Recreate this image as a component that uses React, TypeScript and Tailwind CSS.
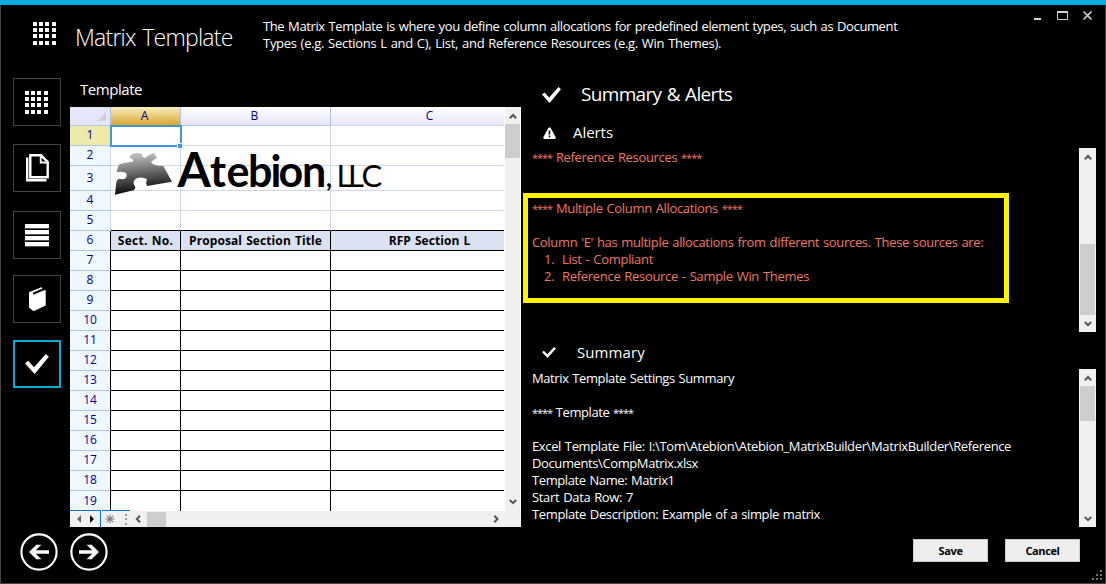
import type { ReactNode } from 'react';

const GridIcon = () => (
  <svg width="24" height="24" viewBox="0 0 24 24" fill="#fff" shapeRendering="crispEdges">
    {[0, 6, 12, 19].map((y) => [0, 6, 12, 19].map((x) => <rect key={`${x}-${y}`} x={x} y={y} width="4" height="4" />))}
  </svg>
);

const PagesIcon = () => (
  <svg className="shrink-0" width="48" height="48" viewBox="13 144 48 48" fill="none" stroke="#fff">
    <path d="M30.3 155.3H41L47.7 162V177.3H30.3Z" strokeWidth="2.4" />
    <path d="M40.7 155V162.5H48" strokeWidth="1.8" />
    <path d="M27.2 157.5V180.3H46.5" strokeWidth="2.4" />
  </svg>
);

const ListIcon = () => (
  <svg width="24" height="24" viewBox="0 0 24 24" shapeRendering="crispEdges">
    {[0, 6, 12, 18].map((y) => (
      <g key={y}>
        <rect y={y} width="24" height="4" fill="#fff" />
        <rect y={y + 4} width="24" height="1" fill="#555" />
      </g>
    ))}
  </svg>
);

const BookIcon = () => (
  <svg className="shrink-0" width="48" height="48" viewBox="13 275 48 48" fill="#fff">
    <path d="M29 292.2L41.4 287.2L42.6 288.6L32.6 292.8L33.8 294.8L42.8 290.8L45.7 290V305.4L34.2 311L32.6 310.6L29 307.6Z" />
  </svg>
);

const Check = ({ width, height }: { width: number; height: number }) => (
  <svg width={width} height={height} viewBox="25.7 354 23.6 20.2" fill="#fff" preserveAspectRatio="none">
    <path d="M25.7 363.6L28.8 360.9L34.6 367.4L46.2 354.1L49.2 356.8L35.2 374.1Z" />
  </svg>
);

const ArrowButton = ({ flip }: { flip?: boolean }) => (
  <svg width="38" height="38" viewBox="20 533 38 38" className={flip ? 'rotate-180' : ''}>
    <circle cx="39" cy="552" r="17.6" fill="none" stroke="#fff" strokeWidth="2.1" />
    <path fill="#fff" d="M29 552L36.3 544.8H41.4L35.8 550.3H49V553.7H35.8L41.4 559.2H36.3Z" />
  </svg>
);

const chevrons = {
  up: 'M0.8 6.2L4 3L7.2 6.2',
  down: 'M0.8 2L4 5.2L7.2 2',
  left: 'M6 0.8L2.8 4L6 7.2',
  right: 'M2.3 0.8L5.5 4L2.3 7.2',
};
const Chevron = ({ dir }: { dir: keyof typeof chevrons }) => (
  <svg width="8" height="8" viewBox="0 0 8 8" fill="none" stroke="#555" strokeWidth="2">
    <path d={chevrons[dir]} />
  </svg>
);

const Stars = () => <span className="text-[11px] tracking-[-1.05px]">****</span>;

function VScroll({ thumb, className }: { thumb: string; className: string }) {
  return (
    <div className={`flex w-[17px] shrink-0 flex-col items-center bg-[#f0f0f0] ${className}`}>
      <div className="flex h-[17px] items-center"><Chevron dir="up" /></div>
      <div className="flex w-[15px] flex-1 flex-col"><div className={`bg-[#cdcdcd] ${thumb}`} /></div>
      <div className="flex h-[17px] items-center"><Chevron dir="down" /></div>
    </div>
  );
}

function NavTile({ className, children }: { className: string; children: ReactNode }) {
  return <div className={`flex h-12 w-12 items-center justify-center ${className}`}>{children}</div>;
}

function Logo() {
  return (
    <svg className="absolute left-[43px] top-[33px] overflow-visible" width="274" height="66" viewBox="113 140 274 66">
      <defs>
        <linearGradient id="piece" x1="0" y1="0" x2="0.15" y2="1">
          <stop offset="0" stopColor="#cfcfcf" />
          <stop offset="0.45" stopColor="#777" />
          <stop offset="1" stopColor="#080808" />
        </linearGradient>
      </defs>
      <path
        transform="scale(0.33333)"
        fill="url(#piece)"
        d="M345 584L349 545Q353 533 366 538Q382 538 380 522Q374 513 350 516L356 495Q362 489 398 485Q404 479 392 475Q384 468 398 461Q415 456 426 462Q425 474 437 473Q446 462 462 459L471 474Q458 479 453 487Q460 498 490 498L516 545L441 558Q436 548 441 538Q428 529 410 535Q396 544 403 556Q410 566 400 571Z"
      />
      <text y="187" x="177.5 210 226.5 248 270.5 278.5 302 326" className="font-['Lato'] text-[43px] font-bold">
        <tspan className="text-[48px]">A</tspan>tebion<tspan className="text-[26px]">,</tspan>
      </text>
      <text y="186.5" x="336.5 348 361.5" className="font-['Lato'] text-[31px]">LLC</text>
    </svg>
  );
}

const headings = ['tracking-[0.25px]', 'tracking-[0.1px]', 'tracking-[0.07px]'];
const titles = ['Sect. No.', 'Proposal Section Title', 'RFP Section L'];
const rows = Array.from({ length: 19 }, (_, i) => i + 1);

function Row({ n }: { n: number }) {
  const dark = n >= 6;
  const line = dark ? 'border-r-black' : 'border-r-[#d0d7e5]';
  const bottom = n === 19 ? '' : 'border-b';
  const bottomLine = n >= 5 ? 'border-b-black' : 'border-b-[#d0d7e5]';
  return (
    <div className={`grid grid-cols-[41px_70px_150px_173px] text-[12px] leading-4 ${n === 3 ? 'h-[25px]' : 'h-5'}`}>
      <div className={`flex items-center justify-center border-r text-[#00008b] ${n === 3 ? '' : 'pb-px'} ${n === 19 ? '' : 'border-b border-b-[#b0c4de]'} ${line} ${n === 1 ? 'bg-[#eee8aa]' : 'bg-[#f0f8ff]'}`}>{n}</div>
      {[0, 1, 2].map((c) => (
        <div key={c} className={`flex items-center justify-center overflow-hidden whitespace-nowrap font-bold text-black [word-spacing:0.8px] ${bottom} ${line} ${bottomLine} ${c < 2 ? 'border-r' : 'pl-6'} ${headings[c]} ${n === 6 ? 'bg-[#d9e1f2]' : 'bg-white'}`}>
          {n === 6 ? titles[c] : ''}
        </div>
      ))}
    </div>
  );
}

function Sheet() {
  return (
    <div className="relative flex h-[420px] flex-col bg-[#f0f0f0]">
      <div className="flex h-[404px]">
        <div className="w-[435px] bg-white">
          <div className="grid h-[19px] w-[434px] grid-cols-[41px_70px_150px_173px] text-[12px] leading-4 text-[#00008b]">
            <div className="flex items-end justify-end border-b border-r border-[#b0c4de] bg-[#e6e6fa] pb-1 pr-1">
              <svg width="9" height="9" viewBox="0 0 9 9" fill="#d0d0d4"><path d="M9 0V9H0Z" /></svg>
            </div>
            <div className="flex items-center justify-center border-b border-r border-[#b0c4de] bg-gradient-to-b from-[#f7eebb] to-[#daa520] pr-0.5">A</div>
            <div className="flex items-center justify-center border-b border-r border-[#b0c4de] bg-gradient-to-b from-white to-[#e6e6fa] pr-0.5">B</div>
            <div className="flex items-center justify-center border-b border-[#d0d7e5] bg-gradient-to-b from-white to-[#e6e6fa] pl-6">C</div>
          </div>
          {rows.map((n) => <Row key={n} n={n} />)}
        </div>
        <div className="flex w-4 flex-col items-center border-r border-white">
          <div className="flex h-[17px] items-center"><Chevron dir="up" /></div>
          <div className="h-[34px] w-[15px] bg-[#cdcdcd]" />
          <div className="flex-1" />
          <div className="flex h-[17px] items-center pb-0.5"><Chevron dir="down" /></div>
        </div>
      </div>
      <div className="flex h-4 items-center">
        <div className="flex h-full w-[31px] items-center justify-center gap-[9px] border-r border-[#0078d7]">
          <svg width="4" height="8" viewBox="0 0 4 8"><path d="M4 0V8L0 4Z" fill="#666" /></svg>
          <svg width="4" height="8" viewBox="0 0 4 8"><path d="M0 0V8L4 4Z" fill="#000" /></svg>
        </div>
        <svg className="ml-[4px]" width="10" height="10" viewBox="0 0 10 10" stroke="#777c85" strokeWidth="1.1"><path d="M5 0.5V9.5M0.5 5H9.5M1.8 1.8L8.2 8.2M8.2 1.8L1.8 8.2" /></svg>
        <svg className="ml-[10px]" width="2" height="11" viewBox="0 0 2 11" fill="#999" shapeRendering="crispEdges"><path d="M0 0H2V2H0ZM0 4H2V6H0ZM0 9H2V11H0Z" /></svg>
        <div className="ml-[7px]"><Chevron dir="left" /></div>
        <div className="ml-[5px] h-[15px] w-[19px] bg-[#cdcdcd]" />
        <div className="flex-1" />
        <div className="mr-[21px]"><Chevron dir="right" /></div>
      </div>
      <div className="absolute left-0 top-[403px] h-px w-[31px] bg-[#0078d7]" />
      <div className="absolute left-[32px] top-[403px] h-px w-[28px] bg-[#0078d7]" />
      <div className="absolute left-[40px] top-[18px] h-[22px] w-[72px] border-2 border-[#4096dc]" />
      <div className="absolute left-[107px] top-[36px] h-[5px] w-[5px] border-l border-t border-white bg-[#4096dc]" />
      <Logo />
    </div>
  );
}

export default function App() {
  return (
    <div className="relative flex h-[584px] w-[1106px] flex-col overflow-hidden bg-black font-['Open_Sans',sans-serif] text-white">
      <div className="h-[5px] shrink-0 bg-[#00aedb]" />
      <div className="flex flex-1 flex-col border-x border-b border-[#444]">
        <header className="flex h-[73px] shrink-0 whitespace-nowrap">
          <div className="ml-8 mt-[17px] w-[42px]"><GridIcon /></div>
          <h1 className="mt-[15px] w-[188px] text-[23px] font-light leading-[34px] tracking-[-0.78px] [word-spacing:1.5px]">Matrix Template</h1>
          <div className="mt-[13px] w-[770px] text-[13px] leading-[17px] [word-spacing:0.8px]">
            <p className="tracking-[-0.38px]">The Matrix Template is where you define column allocations for predefined element types, such as Document</p>
            <p className="tracking-[-0.284px]">Types (e.g. Sections L and C), List, and Reference Resources (e.g. Win Themes).</p>
          </div>
          <svg className="mt-[5px]" width="62" height="12" viewBox="1033 10 62 12" fill="none" stroke="#d4d4d4">
            <path d="M1034 19H1041" strokeWidth="2" />
            <path d="M1057.5 12V19.5H1067.5V12" />
            <path d="M1057 12H1068" strokeWidth="2" />
            <path d="M1083.5 11.5L1091.5 19.5M1091.5 11.5L1083.5 19.5" strokeWidth="1.7" />
          </svg>
        </header>

        <main className="flex h-[449px] shrink-0">
          <nav className="flex w-[69px] shrink-0 flex-col pl-3">
            <NavTile className="border border-[#444] pt-0.5"><GridIcon /></NavTile>
            <NavTile className="mt-[18px] border border-[#444]"><PagesIcon /></NavTile>
            <NavTile className="mt-[19px] border border-[#444] pt-0.5"><ListIcon /></NavTile>
            <NavTile className="mt-4 border border-[#444]"><BookIcon /></NavTile>
            <NavTile className="mt-[17px] border-2 border-[#00aedb]"><Check width={24} height={20} /></NavTile>
          </nav>

          <section className="w-[451px] shrink-0">
            <h2 className="h-[29px] pl-[10px] text-[15px] leading-[22px] tracking-[-0.45px]">Template</h2>
            <Sheet />
          </section>

          <section className="flex flex-1 flex-col">
            <div className="flex h-[34px] items-center pl-[21px]">
              <Check width={19} height={16} />
              <h2 className="ml-5 pb-0.5 text-[19px] leading-[26px] tracking-[-0.67px] [word-spacing:1px]">Summary &amp; Alerts</h2>
            </div>
            <div className="flex h-9 items-center pl-[22px] pt-[5px]">
              <svg width="13" height="12" viewBox="0 0 13 12"><path d="M5.6 0.4H7.4L12.8 10.6L12 12H1L0.2 10.6Z" fill="#fff" /><path d="M6.5 3.6V7.6M6.5 8.6V10.2" stroke="#000" strokeWidth="1.6" /></svg>
              <h3 className="ml-[17px] pb-0.5 text-[15px] leading-5 tracking-[-0.05px]">Alerts</h3>
            </div>
            <div className="flex h-[184px] whitespace-pre text-[13px] leading-[17px] text-[#f07866] [word-spacing:0.8px]">
              <div className="flex-1 pl-[11px] pt-[1px]">
                <p className="tracking-[-0.33px]"><Stars /> Reference Resources <Stars /></p>
                <p className="mt-[34px] tracking-[-0.33px]"><Stars /> Multiple Column Allocations <Stars /></p>
                <p className="mt-[17px] tracking-[-0.325px]">Column 'E' has multiple allocations from different sources. These sources are:</p>
                <ol className="pl-[12px]">
                  <li className="flex tracking-[-0.3px]"><span className="w-[18px]">1.</span>List - Compliant</li>
                  <li className="flex tracking-[-0.3px]"><span className="w-[18px]">2.</span>Reference Resource - Sample Win Themes</li>
                </ol>
              </div>
              <VScroll className="mr-[9px]" thumb="mt-[79px] h-[71px]" />
            </div>
            <div className="flex h-[37px] items-center pl-[21px] pt-[3px]">
              <Check width={14} height={11} />
              <h3 className="ml-[21px] text-[15px] leading-5 tracking-[0.1px]">Summary</h3>
            </div>
            <div className="flex h-[158px] whitespace-pre text-[13px] leading-[17px] [word-spacing:0.8px]">
              <div className="flex-1 pl-[11px] pt-[1px]">
                <p className="tracking-[-0.4px]">Matrix Template Settings Summary</p>
                <p className="mt-[17px] tracking-[-0.42px]"><Stars /> Template <Stars /></p>
                <p className="mt-[17px] tracking-[-0.36px]">{'Excel Template File: I:\\Tom\\Atebion\\Atebion_MatrixBuilder\\MatrixBuilder\\Reference'}</p>
                <p className="tracking-[-0.392px]">{'Documents\\CompMatrix.xlsx'}</p>
                <p className="tracking-[-0.4px]">Template Name: Matrix1</p>
                <p className="tracking-[-0.33px]">Start Data Row: 7</p>
                <p className="tracking-[-0.362px]">Template Description: Example of a simple matrix</p>
              </div>
              <VScroll className="mr-[9px]" thumb="h-[35px]" />
            </div>
          </section>
        </main>

        <footer className="flex flex-1 items-start pl-[19px]">
          <div className="mt-[6px] flex gap-3"><ArrowButton /><ArrowButton flip /></div>
          <div className="ml-auto mt-3 flex gap-[17px] text-[11px] font-bold text-black">
            <button className="h-[23px] w-[75px] border border-[#ccc] bg-[#eee] pt-0.5 tracking-[-0.35px]">Save</button>
            <button className="h-[23px] w-[75px] border border-[#ccc] bg-[#eee] pt-0.5 tracking-[-0.4px]">Cancel</button>
          </div>
          <svg className="ml-3 mt-[43px] mr-[3px]" width="10" height="10" viewBox="0 0 10 10" fill="#777" shapeRendering="crispEdges">
            <path d="M8 0h2v2h-2zM4 4h2v2h-2zM8 4h2v2h-2zM0 8h2v2h-2zM4 8h2v2h-2zM8 8h2v2h-2z" />
          </svg>
        </footer>
      </div>
      <div className="absolute left-[523px] top-[193px] h-[110px] w-[486px] border-[5px] border-[#fff200]" />
    </div>
  );
}
